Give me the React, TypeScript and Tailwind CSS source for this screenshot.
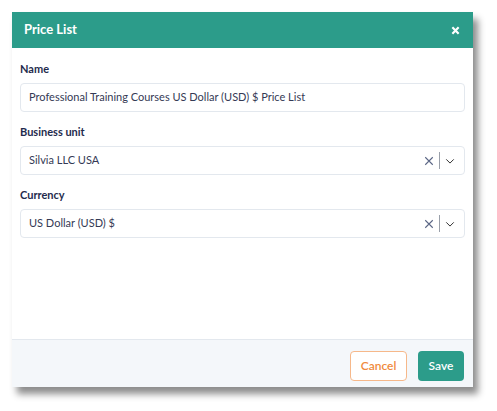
import React from "react";

function ClearIcon() {
  return (
    <svg width="10" height="10" viewBox="0 0 12 12" className="text-[#5b6685]">
      <path d="M1.5 1.5 L10.5 10.5 M10.5 1.5 L1.5 10.5" stroke="currentColor" strokeWidth="1.3" fill="none" />
    </svg>
  );
}

function Chevron() {
  return (
    <svg width="10" height="10" viewBox="0 0 12 12" className="text-[#333]">
      <path d="M1.5 4 L6 8.5 L10.5 4" stroke="currentColor" strokeWidth="1.2" fill="none" />
    </svg>
  );
}

function Select({ value }: { value: string }) {
  return (
    <div className="flex h-[29px] items-center rounded-[4px] border border-[#e3e8ee] bg-white pl-[8px] pr-[9px]">
      <span className="flex-1 text-[11px] text-[#353a55]">{value}</span>
      <ClearIcon />
      <span className="mx-[5px] h-[17px] w-px bg-[#9aa0aa]" />
      <Chevron />
    </div>
  );
}

export default function App() {
  return (
    <div className="h-[411px] w-[497px] bg-white pl-[12px] pt-[12px]" style={{ fontFamily: "Lato, 'Open Sans', sans-serif" }}>
      <div className="flex h-[375px] w-[461px] flex-col bg-white shadow-[5px_7px_7px_rgba(0,0,0,0.45)]">
        <div className="flex h-[36px] items-center justify-between bg-[#2c9c8a] pl-[12px] pr-[13px]">
          <span className="text-[13px] font-bold text-white">Price List</span>
          <svg width="9" height="9" viewBox="0 0 10 10">
            <path d="M1.5 1.5 L8.5 8.5 M8.5 1.5 L1.5 8.5" stroke="white" strokeWidth="2.4" fill="none" />
          </svg>
        </div>
        <div className="flex flex-1 flex-col px-[8px] pt-[14px]">
          <label className="mb-[7px] text-[11px] leading-[14px] font-bold text-[#1f2b4d]">Name</label>
          <div className="flex h-[29px] items-center rounded-[4px] border border-[#e3e8ee] bg-white px-[8px] text-[11px] text-[#353a55]">
            Professional Training Courses US Dollar (USD) $ Price List
          </div>
          <label className="mb-[7px] mt-[13px] text-[11px] leading-[14px] font-bold text-[#1f2b4d]">Business unit</label>
          <Select value="Silvia LLC USA" />
          <label className="mb-[7px] mt-[13px] text-[11px] leading-[14px] font-bold text-[#1f2b4d]">Currency</label>
          <Select value="US Dollar (USD) $" />
        </div>
        <div className="flex h-[48px] items-start justify-end gap-[11px] border-t border-[#e3e8ee] bg-[#f4f7fa] pr-[9px] pt-[11px]">
          <button className="h-[30px] w-[57px] rounded-[4px] border border-[#f6b88a] bg-white text-[12px] font-semibold text-[#f08a3c]">
            Cancel
          </button>
          <button className="h-[30px] w-[46px] rounded-[4px] bg-[#2c9c8a] text-[12px] font-semibold text-white">
            Save
          </button>
        </div>
      </div>
    </div>
  );
}
